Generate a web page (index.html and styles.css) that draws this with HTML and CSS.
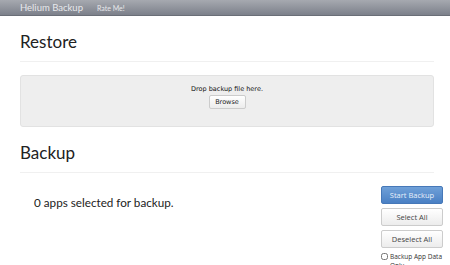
FILE: index.html
```html
<!DOCTYPE html>
<html lang="en">
<head>
    <meta charset="UTF-8">
    <title>Helium Backup</title>
    <link rel="stylesheet" href="styles.css">
</head>
<body>
    <div class="navbar">
        <span class="brand">Helium Backup</span>
        <a class="nav-link" href="#">Rate Me!</a>
    </div>

    <div class="container">
        <h1>Restore</h1>
        <hr>
        <div class="dropzone">
            <div>Drop backup file here.</div>
            <button class="btn btn-small">Browse</button>
        </div>

        <h1 class="backup-title">Backup</h1>
        <hr>
        <div class="backup-row">
            <div class="selected-count">0 apps selected for backup.</div>
            <div class="actions">
                <button class="btn btn-primary">Start Backup</button>
                <button class="btn">Select All</button>
                <button class="btn">Deselect All</button>
                <label class="check"><input type="checkbox"> Backup App Data Only</label>
            </div>
        </div>
    </div>
</body>
</html>
```

FILE: styles.css
```css
body {
    margin: 0;
    font-family: Lato, "Open Sans", sans-serif;
    color: #222;
    background-color: white;
    overflow: hidden;
}
.navbar {
    height: 15px;
    display: flex;
    align-items: center;
    padding-left: 20px;
    background: linear-gradient(#a6a9b0, #7c808a);
    border-bottom: 1px solid #6a6e77;
}
.brand {
    font-size: 9.5px;
    color: #e8e9ec;
    margin-right: 14px;
}
.nav-link {
    font-size: 7px;
    color: #e8e9ec;
    text-decoration: none;
}
.container {
    padding: 0 16px 0 20px;
}
h1 {
    font-size: 17px;
    font-weight: 400;
    margin: 16px 0 0;
    line-height: 20px;
}
.backup-title {
    margin-top: 16px;
}
hr {
    border: none;
    border-top: 1px solid #f0f0f0;
    margin: 9px 0 13px;
}
.dropzone {
    box-sizing: border-box;
    height: 52px;
    background-color: #eee;
    border: 1px solid #e2e2e2;
    border-radius: 3px;
    display: flex;
    flex-direction: column;
    align-items: center;
    padding-top: 9px;
    font-family: "DejaVu Sans", sans-serif;
    font-size: 6.5px;
    color: #111;
}
.btn {
    font-family: "Open Sans", sans-serif;
    font-size: 7.5px;
    color: #444;
    background: linear-gradient(#ffffff, #ececec);
    border: 1px solid #ccc;
    border-radius: 2px;
    height: 18px;
    width: 62px;
    padding: 0;
}
.btn-small {
    width: 37px;
    height: 14px;
    font-family: "DejaVu Sans", sans-serif;
    font-size: 6.5px;
    color: #222;
    margin-top: 2px;
}
.btn-primary {
    color: #e8f0fa;
    background: linear-gradient(#6fa0d8, #4a80c4);
    border-color: #4678b8;
}
.backup-row {
    display: flex;
    justify-content: space-between;
    margin-right: -9px;
}
.selected-count {
    font-size: 11.7px;
    line-height: 14px;
    padding: 9px 0 0 14px;
}
.actions {
    display: flex;
    flex-direction: column;
    gap: 4px;
    width: 62px;
}
.check {
    font-family: "Open Sans", sans-serif;
    font-size: 6.5px;
    color: #333;
    display: flex;
    align-items: flex-start;
    gap: 2px;
    line-height: 9px;
}
.check input {
    width: 7px;
    height: 7px;
    margin: 1px 0 0;
}
```
